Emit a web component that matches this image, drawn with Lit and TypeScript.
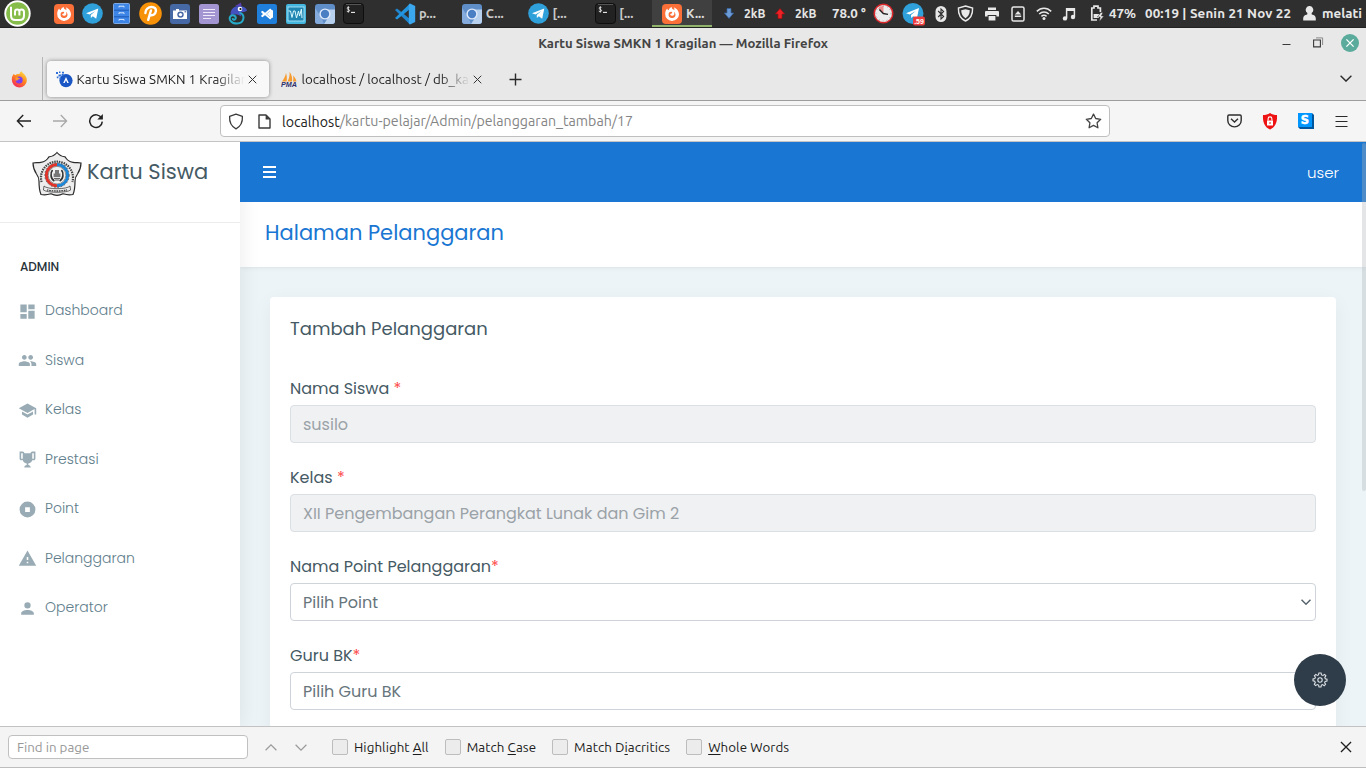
import { LitElement, html, css, svg, nothing } from "lit";
import type { TemplateResult } from "lit";
import { customElement } from "lit/decorators.js";

const t = (text: unknown) => html`<span class="t">${text}</span>`;
const ic = (w: number, h: number, vb: string, body: unknown) =>
  html`<svg width=${w} height=${h} viewBox=${vb} fill="none">${body}</svg>`;

/* ---------- application icons ---------- */
const firefoxTile = ic(20, 20, "0 0 20 20", svg`
  <rect width="20" height="20" rx="4" fill="#fb6f38"/>
  <path d="M3.2 10C3.2 7.6 4 6 5.2 4.6C5.4 5.6 5.8 6 6.6 6.2C7.4 4.4 8.4 3.4 9.8 3C9.6 4.8 11 5.4 12.4 6C12.6 5 12.4 4.2 11.8 3.2C15 4.3 17 7.2 17 10.4A6.9 6.7 0 0 1 3.2 10Z" fill="#fff"/>
  <path d="M7.2 8.4C8.6 7.2 10.4 7.8 10.2 9C9.4 9.8 8.2 9.6 8.2 10.8C9 12.2 11.6 12 12.2 10.4C12.5 9.4 12.4 8.8 12 7.8C14.4 9.6 14 13.8 10.4 14.1C6.6 14 5.8 10.6 7.2 8.4Z" fill="#fb6f38"/>`);
const telegram = ic(21, 21, "0 0 21 21", svg`
  <circle cx="10.5" cy="10.5" r="10.3" fill="#2fa0da"/>
  <path d="M4 10.3L16.3 5.4L14.2 15.8L10.8 13.3L8.9 15L8.7 12L13.4 7.9L7.5 11.6Z" fill="#fff"/>`);
const cabinet = ic(17, 21, "0 0 17 21", svg`
  <rect x=".5" y=".5" width="16" height="20" rx="1" fill="#3c84e6" stroke="#7ea9e2"/>
  <path d="M1 7.2H16M1 13.8H16" stroke="#1d5cb4"/>
  <path d="M6 4.4V3.2H11V4.4M6 11V9.8H11V11M6 17.6V16.4H11V17.6" stroke="#dcebff"/>`);
const pIcon = ic(23, 23, "0 0 23 23", svg`
  <circle cx="11.5" cy="11.5" r="11.3" fill="#f79208"/>
  <path d="M6.4 11C6.4 7.4 9.4 5 12.6 5C15.6 5 17.2 6.8 16.9 9.2C16.5 12 14 13.8 11 13.2" stroke="#fff" stroke-width="2.4" stroke-linecap="round"/>
  <path d="M12 8.4L9.2 17.8" stroke="#fff" stroke-width="2.4" stroke-linecap="round"/>`);
const camera = ic(20, 20, "0 0 20 20", svg`
  <rect width="20" height="20" rx="3" fill="#4668a4"/>
  <path d="M3 6.5H6V5H9V6.5H17V15H3Z" fill="#fff"/><circle cx="10.5" cy="10.6" r="3.2" fill="#4668a4"/><circle cx="10.5" cy="10.6" r="1.7" fill="#fff"/><path d="M14.5 7.2H16.3V8.4H14.5Z" fill="#4668a4"/>`);
const notes = ic(20, 20, "0 0 20 20", svg`
  <rect width="20" height="20" rx="2.5" fill="#a395d2"/>
  <path d="M4 5.5H16M4 8.5H16M4 11.5H16M4 14.5H12" stroke="#eeeafa" stroke-width="1.2"/>`);
const chameleon = ic(20, 23, "0 0 20 23", svg`
  <path d="M7 4L13 .6L13.6 4.6Z" fill="#5a3fae"/>
  <path d="M2.6 12C2.4 7 6.4 4 10.6 4C15 4 18.8 6 19 8.8C16.8 10.4 13.6 10.6 12 10.4C13 11.4 13.6 13 13 14.4C11 13 9.4 12.4 7.4 12.4C5.6 12.2 4 12.6 2.6 14Z" fill="#4452c0"/>
  <path d="M11.4 10.6C17.6 12.4 16.6 21.4 9 21.6C3 21.6 .4 17.4 2.4 14.4C4.4 12 8.4 13.6 7.6 16.6C6.8 18.4 4.6 17.8 4.8 16.2" stroke="#27a9c8" stroke-width="2"/>
  <circle cx="12" cy="7" r="2.3" fill="#fff"/><circle cx="12.5" cy="7" r="1.1" fill="#111"/>`);
const vsTile = ic(20, 20, "0 0 20 20", svg`
  <rect width="20" height="20" rx="2.5" fill="#1f7fdb"/>
  <path d="M4.5 7.5L7 10L4.5 12.5M5 7.5L13.8 14.8M5 12.5L13.8 5.2" stroke="#fff" stroke-width="1.7"/><path d="M12.6 5L16 6.5V13.5L12.6 15V12.4L9.6 10L12.6 7.6Z" fill="#fff"/>`);
const monitor = ic(20, 20, "0 0 20 20", svg`
  <rect width="20" height="20" rx="2" fill="#45b6dd"/><rect x="2" y="3" width="16" height="14" fill="#1f87b2" stroke="#b8ecff" stroke-width=".8"/>
  <path d="M2.5 7H4.5L6 13.5L7.5 7H9L10.5 14L12.5 7L13.6 12L15.4 5L16 14" stroke="#d9f8ff" stroke-width="1"/>`);
const chromium = ic(20, 20, "0 0 20 20", svg`
  <rect width="20" height="20" rx="3" fill="#5e8dc8"/>
  <path d="M10 5.5H20V17A3 3 0 0 1 17 20H9L14.2 12Z" fill="#b7d0ee"/><path d="M0 4L6.2 13L9 20H3A3 3 0 0 1 0 17Z" fill="#84abdc"/>
  <circle cx="10" cy="10" r="5.6" fill="#dfeafa"/><circle cx="10" cy="10" r="4.2" fill="#4a7fc4"/>`);
const terminal = ic(21, 21, "0 0 21 21", svg`
  <rect x=".5" y=".5" width="20" height="20" rx="3.2" fill="#222" stroke="#0e0e0e"/><path d="M3 1.5H18" stroke="#555"/>
  <path d="M6.4 4.4C5 3.8 3.8 4.6 4.2 5.6C4.6 6.5 6.6 6.3 6.6 7.6C6.6 8.7 4.8 8.8 3.8 8.2M5.3 3.4V9.6" stroke="#eee" stroke-width=".9"/><path d="M8 9.4H12" stroke="#eee" stroke-width="1.1"/>`);
const mint = ic(27, 27, "0 0 27 27", svg`
  <circle cx="13.5" cy="13.5" r="13.2" fill="#fff"/><circle cx="13.5" cy="13.5" r="11.3" fill="#86bd4a"/>
  <path d="M7 6.8V15.5C7 18.4 8.6 20 11.4 20H15.6C18.4 20 20 18.4 20 15.5V12C20 10.4 19 9.4 17.6 9.4C16.3 9.4 15.4 10.4 15.4 11.8V15.6M15.4 11.8C15.4 10.4 14.4 9.4 13.2 9.4C11.8 9.4 11 10.4 11 11.8V15.6" stroke="#fff" stroke-width="2"/>`);
const vscode = ic(22, 22, "0 0 22 22", svg`
  <path d="M1 7L3 5.5L16 16V21.5Z" fill="#1f86cf"/><path d="M1 15L3 16.6L16 6V.5Z" fill="#2394de"/><path d="M16 .5L21.2 3V19L16 21.5L14.8 20.5V1.5Z" fill="#3aa7ee"/>`);

const arrowDown = ic(10, 11, "0 0 10 11", svg`<path d="M3 .5H7V5H9.6L5 10.4L.4 5H3Z" fill="#6c9bd6" stroke="#3566a8" stroke-width=".7"/>`);
const arrowUp = ic(10, 11, "0 0 10 11", svg`<path d="M3 10.5H7V6H9.6L5 .6L.4 6H3Z" fill="#ec2226" stroke="#a80d10" stroke-width=".7"/>`);
const clock = ic(21, 21, "0 0 21 21", svg`
  <circle cx="10.5" cy="10.5" r="9.3" fill="#ececec" stroke="#d8262b" stroke-width="1.5"/>
  <path d="M10.5 10.5L5 5.2A7.8 7.8 0 0 1 10.5 2.7Z" fill="#ee8f8f"/><path d="M10.5 10.7L6.4 6.4M10.2 10.5L15 11.4" stroke="#222" stroke-width="1.4"/><circle cx="10.5" cy="10.5" r="7.6" stroke="#888" stroke-width=".8" stroke-dasharray="1 2.9"/>`);
const telegramBadge = ic(24, 24, "0 0 24 24", svg`
  <circle cx="12" cy="11.5" r="10.5" fill="#2fa0da"/>
  <path d="M5 11.2L18 6L16 16L12.2 14.2L10.2 16L10 13L14.7 8.9L8.7 12.6Z" fill="#fff"/>
  <rect x="12" y="14.5" width="12" height="9" rx="2" fill="#ee3c3c"/><text x="18" y="21.6" font-size="7" fill="#fff" text-anchor="middle" font-family="Liberation Sans, sans-serif">.59</text>`);
const bluetooth = ic(12, 16, "0 0 12 16", svg`
  <rect x=".5" y="0" width="11" height="16" rx="5.5" fill="#e8e8e8"/><path d="M3.2 5L8.6 10.6L6 13V3L8.6 5.4L3.2 11" stroke="#2f2f2f" stroke-width="1.1"/>`);
const shieldTray = ic(17, 17, "0 0 17 17", svg`
  <path d="M8.5 1L15.6 3C15.8 9 13.6 13.8 8.5 16C3.4 13.8 1.2 9 1.4 3Z" stroke="#e8e8e8" stroke-width="1.4"/><path d="M8.5 4.2L12.8 5.3C12.8 9 11.2 11.8 8.5 13.2C5.8 11.8 4.2 9 4.2 5.3Z" fill="#e8e8e8"/>`);
const printer = ic(14, 14, "0 0 14 14", svg`<path d="M3 .5H11V3H3ZM1 4H13A1 1 0 0 1 14 5V9.6H11.4V8H2.6V9.6H0V5A1 1 0 0 1 1 4ZM3.6 9H10.4V13.5H3.6Z" fill="#e8e8e8"/>`);
const eject = ic(14, 16, "0 0 14 16", svg`<rect x="1" y="1" width="12" height="14" rx="1.6" stroke="#e8e8e8" stroke-width="1.5"/><path d="M7 5L10.2 8.4H3.8ZM3.8 9.4H10.2V11H3.8Z" fill="#e8e8e8"/>`);
const wifi = ic(16, 13, "0 0 16 13", svg`<path d="M.8 4.4C5 .2 11 .2 15.2 4.4M3.2 7C6 4.2 10 4.2 12.8 7M5.4 9.4C7 8 9 8 10.6 9.4" stroke="#e8e8e8" stroke-width="1.5"/><circle cx="8" cy="11.4" r="1.5" fill="#e8e8e8"/>`);
const music = ic(14, 14, "0 0 14 14", svg`<path d="M4.6 11V1.8H12.4V9.8" stroke="#e8e8e8" stroke-width="1.5"/><path d="M4 1H13V4H4Z" fill="#e8e8e8"/><circle cx="3" cy="11.4" r="2.2" fill="#e8e8e8"/><circle cx="11" cy="10" r="2.2" fill="#e8e8e8"/>`);
const battery = ic(15, 17, "0 0 15 17", svg`<path d="M7 15H1.8V3H4V1.2H8V3H10.4V7" stroke="#e8e8e8" stroke-width="1.7"/><path d="M3.6 9H9V13H3.6Z" fill="#e8e8e8"/><path d="M10.8 7.4L7.4 12H10.2L9.4 16.4L14 11H11.4L13 7.4Z" fill="#e8e8e8" stroke="#2f2f2f" stroke-width=".5"/>`);
const person = ic(13, 15, "0 0 13 15", svg`<path d="M6.5 0A3.6 3.8 0 0 1 8.6 7L8.8 8.4C11.4 8.8 12.8 10 12.8 12.4V14.4H.2V12.4C.2 10 1.6 8.8 4.2 8.4L4.4 7A3.6 3.8 0 0 1 6.5 0Z" fill="#e8e8e8"/>`);

/* ---------- browser icons ---------- */
const firefoxColor = ic(17, 17, "0 0 17 17", svg`
  <defs><linearGradient id="f" x1="14" y1="1" x2="4" y2="16" gradientUnits="userSpaceOnUse"><stop stop-color="#ffe14a"/><stop offset=".45" stop-color="#ff8a1e"/><stop offset="1" stop-color="#f5245c"/></linearGradient></defs>
  <path d="M.8 8.6C.8 5.6 1.8 4 3 2.8C3.2 3.6 3.6 4 4.2 4.2C5.6 2.8 7 2.8 8.4 3C8.6 2 9.4 .8 10.6 .2C11 2 15.8 3.6 15.9 9.2A7.5 7.5 0 0 1 .8 8.6Z" fill="url(#f)"/>
  <circle cx="8.2" cy="9" r="3.5" fill="#7b3ff0"/><path d="M4.4 6.6C6.4 5.8 7.4 7 9 7.2C8.6 8.6 6.6 8 6.4 9.4L4.6 9.6Z" fill="#ff9a24"/>`);
const siteIcon = ic(17, 17, "0 0 17 17", svg`
  <circle cx="10" cy="9.6" r="6.6" fill="#1a56c4"/><path d="M10 6L12.8 12H11.3L10 9.2L8.7 12H7.2Z" fill="#fff"/>
  <path d="M0 1H2V3H0ZM3 .5H4.5V2H3ZM2.5 3.5H5V5.5H2.5ZM6 .8H8V2.6H6ZM.8 5.6H2.4V7.2H.8ZM3.4 6.6H5V8.4H3.4ZM5.6 3H7.6V5H5.6Z" fill="#2f70d8"/>`);
const pmaIcon = ic(17, 17, "0 0 17 17", svg`
  <path d="M1 10.5C3 8 4.4 5 5 2C6 5 6 8 5.6 10.5ZM6.6 10.5C8.4 7 8.8 4 8.6 .8C11 4 11.4 7.4 11 10.5ZM12 10.5C12.6 8 12.4 6.4 12 4.6C14 6.4 15.2 8.6 15.4 10.5Z" fill="#f79b2e"/>
  <text x="0" y="16.4" textLength="16" lengthAdjust="spacingAndGlyphs" font-family="Liberation Sans, sans-serif" font-size="7" font-weight="700" font-style="italic" fill="#2c2f6c">PMA</text>`);
const cross = (s: number, c = "#333", sw = 1.2) => ic(s, s, "0 0 10 10", svg`<path d="M.8 .8L9.2 9.2M9.2 .8L.8 9.2" stroke=${c} stroke-width=${sw}/>`);
const plus = ic(13, 13, "0 0 13 13", svg`<path d="M6.5 .5V12.5M.5 6.5H12.5" stroke="#2a2a2a" stroke-width="1.4"/>`);
const chev = (w: number, h: number, c: string, sw = 1.4, up = false) =>
  ic(w, h, "0 0 12 7", svg`<path d=${up ? "M.6 6.2L6 .9L11.4 6.2" : "M.6 .8L6 6.1L11.4 .8"} stroke=${c} stroke-width=${sw}/>`);
const back = ic(16, 14, "0 0 16 14", svg`<path d="M15 7H1.6M7.2 1L1.4 7L7.2 13" stroke="#222" stroke-width="1.4"/>`);
const forward = ic(16, 14, "0 0 16 14", svg`<path d="M1 7H14.4M8.8 1L14.6 7L8.8 13" stroke="#a8a8a8" stroke-width="1.3"/>`);
const reload = ic(16, 16, "0 0 16 16", svg`<path d="M13.6 5.2A6.3 6.3 0 1 0 14.3 8.6" stroke="#222" stroke-width="1.5"/><path d="M14.9 1V6.6H9.3Z" fill="#222"/>`);
const shield = ic(16, 17, "0 0 16 17", svg`<path d="M8 1.2L14.4 3.4C14.7 9 12.6 13.6 8 15.8C3.4 13.6 1.3 9 1.6 3.4Z" stroke="#3a3a3a" stroke-width="1.3" stroke-linejoin="round"/>`);
const pageIcon = ic(13, 15, "0 0 13 15", svg`<path d="M1 1H8L12 5V14H1Z" stroke="#3a3a3a" stroke-width="1.4" stroke-linejoin="round"/><path d="M7.6 1V5.4H12Z" fill="#3a3a3a"/>`);
const star = ic(17, 16, "0 0 17 16", svg`<path d="M8.5 1.1L10.7 5.5L15.7 6.3L12.1 9.8L12.9 14.8L8.5 12.4L4.1 14.8L4.9 9.8L1.3 6.3L6.3 5.5Z" stroke="#444" stroke-width="1.3" stroke-linejoin="round"/>`);
const pocket = ic(15, 14, "0 0 15 14", svg`<path d="M2 1H13A1.2 1.2 0 0 1 14.2 2.2V6.4A6.7 6.5 0 0 1 .8 6.4V2.2A1.2 1.2 0 0 1 2 1Z" stroke="#2e2e2e" stroke-width="1.4"/><path d="M4 4.8L7.5 8L11 4.8" stroke="#2e2e2e" stroke-width="1.4"/>`);
const redShield = ic(16, 17, "0 0 16 17", svg`<path d="M8 0C10 1.4 12.4 2 15 2C15.4 9 13.6 14 8 16.6C2.4 14 .6 9 1 2C3.6 2 6 1.4 8 0Z" fill="#ee1212"/><path d="M5 7.5H11V12.5H5Z" fill="#fff"/><path d="M6.1 7.6V5.8A1.9 1.9 0 0 1 9.9 5.8V7.6" stroke="#fff" stroke-width="1.1"/><path d="M8 9V11" stroke="#ee1212"/>`);
const sIcon = ic(16, 16, "0 0 16 16", svg`<path d="M0 0H14L16 2V16H2L0 14Z" fill="#00569c"/><path d="M0 0H14V14H0Z" fill="#0096ff"/><text x="7" y="11" font-family="DejaVu Sans, sans-serif" font-weight="700" font-size="11.5" fill="#fff" stroke="#fff" stroke-width=".5" text-anchor="middle">S</text>`);
const menu = ic(13, 11, "0 0 13 11", svg`<path d="M.5 .5H12.5M.5 5.5H12.5M.5 10.5H12.5" stroke="#2a2a2a" stroke-width="1.2"/>`);

/* ---------- page icons ---------- */
const mdi = (d: string) => ic(19, 19, "0 0 24 24", svg`<path fill-rule="evenodd" d=${d} fill="#99abb4"/>`);
const crest = ic(50, 46, "0 0 50 46", svg`
  <path d="M25 1.5C27 4 30 5.5 33 5.8C34.5 8.4 37.6 11 41 11.4C44 11.8 47 11.6 49 12C49 16 47.5 20 45.5 23C43.5 25.5 43 28 43 30.5C43 36 42.5 40 41 43.5C37 44.5 33.5 43.6 31 42.8C27 44.8 23 44.8 19 42.8C16.5 43.6 13 44.5 9 43.5C7.5 40 7 36 7 30.5C7 28 6.5 25.5 4.5 23C2.5 20 1 16 1 12C3 11.6 6 11.8 9 11.4C12.4 11 15.5 8.4 17 5.8C20 5.5 23 4 25 1.5Z" fill="#ededed" stroke="#2b2b2b" stroke-width="1.2"/>
  <path d="M9.6 31A16 16 0 1 1 40.4 31" stroke="#444" stroke-width="2.2" stroke-dasharray="1.5 .9"/>
  <path d="M25 13.6A10.6 10.6 0 0 0 25 34.8" stroke="#e3342b" stroke-width="3"/><path d="M25 13.6A10.6 10.6 0 0 1 25 34.8" stroke="#1d86d6" stroke-width="3"/>
  <circle cx="25" cy="24.2" r="12.2" stroke="#555" stroke-width=".9" stroke-dasharray="1.7 1.7"/>
  <circle cx="25" cy="24.2" r="8.8" fill="#f2f2f2" stroke="#555" stroke-width=".6"/>
  <path d="M20.5 19C18 22 18.6 28 22.4 30M29.5 19C32 22 31.4 28 27.6 30" stroke="#333" stroke-width="1.7"/>
  <path d="M23 19H27V22.4H28.4V26H21.6V22.4H23Z" fill="#777"/><path d="M22 27.4H28M23 29H27" stroke="#444" stroke-width=".9"/>
  <path d="M12 35C15 38.6 35 38.6 38 35L38.6 39C35 42 15 42 11.4 39Z" fill="#ececec" stroke="#444" stroke-width=".8"/><path d="M15 38.8C20 40.4 30 40.4 35 38.8" stroke="#444" stroke-width="1.4" stroke-dasharray="1.6 .8"/>`);
const gear = ic(16, 16, "0 0 16 16", svg`
  <path d="M6.9 1H9.1L9.5 2.9L11 3.5L12.6 2.4L13.9 3.9L12.8 5.4L13.3 6.7L15 7.1V9L13.2 9.4L12.6 10.8L13.6 12.3L12.2 13.7L10.6 12.6L9.4 13.1L9 15H7L6.6 13.1L5.2 12.6L3.6 13.6L2.3 12.2L3.3 10.7L2.7 9.3L1 8.9V7L2.8 6.6L3.4 5.2L2.4 3.8L3.8 2.4L5.3 3.4L6.5 2.9Z" stroke="#dde1e4" stroke-width="1.1"/><circle cx="8" cy="8" r="2.2" stroke="#dde1e4" stroke-width="1.1"/>`);

const MENU: [string, string][] = [
  ["Dashboard", "M13,3V9H21V3M13,21H21V11H13M3,21H11V15H3M3,13H11V3H3V13Z"],
  ["Siswa", "M16 11c1.66 0 2.99-1.34 2.99-3S17.66 5 16 5c-1.66 0-3 1.34-3 3s1.34 3 3 3zm-8 0c1.66 0 2.99-1.34 2.99-3S9.66 5 8 5C6.34 5 5 6.34 5 8s1.34 3 3 3zm0 2c-2.33 0-7 1.17-7 3.5V19h14v-2.5c0-2.33-4.67-3.5-7-3.5zm8 0c-.29 0-.62.02-.97.05 1.16.84 1.97 1.97 1.97 3.45V19h6v-2.5c0-2.33-4.67-3.5-7-3.5z"],
  ["Kelas", "M12,3L1,9L12,15L21,10.09V17H23V9M5,13.18V17.18L12,21L19,17.18V13.18L12,17L5,13.18Z"],
  ["Prestasi", "M18,2C17.1,2 16,3 16,4H8C8,3 6.9,2 6,2H2V11C2,12 3,13 4,13H6.2C6.6,15 7.9,16.7 11,17V19.08C8,19.54 8,22 8,22H16C16,22 16,19.54 13,19.08V17C16.1,16.7 17.4,15 17.8,13H20C21,13 22,12 22,11V2H18M6,11H4V4H6V11M20,11H18V4H20V11Z"],
  ["Point", "M12 2A10 10 0 1 0 12 22A10 10 0 1 0 12 2ZM9 9H15V15H9Z"],
  ["Pelanggaran", "M13,14H11V10H13M13,18H11V16H13M1,21H23L12,2L1,21Z"],
  ["Operator", "M12,4A4,4 0 0,1 16,8A4,4 0 0,1 12,12A4,4 0 0,1 8,8A4,4 0 0,1 12,4M12,14C16.42,14 20,15.79 20,18V20H4V18C4,15.79 7.58,14 12,14Z"],
];

@customElement("desktop-panel")
class DesktopPanel extends LitElement {
  static styles = css`
    :host { display: flex; height: 28px; background: #2f2f2f; border-bottom: 1px solid #232323; box-sizing: border-box; color: #e6e6e6; font: 700 13.333px/27px Ubuntu, "Noto Sans", sans-serif; }
    svg { display: block; flex: none; }
    .t { white-space: pre; }
    .mint { width: 35px; display: flex; align-items: center; justify-content: center; }
    .launch { display: grid; grid-template-columns: repeat(11, 29px); margin-left: 14px; place-items: center; }
    .tasks { display: flex; margin-left: 17px; width: 327px; }
    .task { width: 66.8px; display: grid; grid-template-columns: 40px auto; justify-content: start; place-items: center; box-sizing: border-box; color: #c9c9c9; height: 27px; font-size: 12.8px; }
    .task .t { margin-left: -6px; }
    .on { width: 60px; background: #404040; border-bottom: 2px solid #8fb36b; color: #dcdcdc; }
    .tray { display: grid; grid-template-columns: 30px 20px 31px 37px 43px 16px 44px 12px 36px 18px 34px 18px 32px 24px 36px 151px 26px 44px; margin-left: 2px; align-items: center; }
    .net { font-size: 12px; }
    .date { letter-spacing: .14px; }
    .i { display: flex; justify-content: center; }
  `;
  render() {
    const i = (x: TemplateResult) => html`<div class="i">${x}</div>`;
    return html`
      <div class="mint">${mint}</div>
      <div class="launch">${[firefoxTile, telegram, cabinet, pIcon, camera, notes, chameleon, vsTile, monitor, chromium, terminal]}</div>
      <div class="tasks">
        <div class="task">${vscode}${t("p...")}</div>
        <div class="task">${chromium}${t("C...")}</div>
        <div class="task">${telegram}${t("[...")}</div>
        <div class="task">${terminal}${t("[...")}</div>
        <div class="task on">${firefoxTile}${t("K...")}</div>
      </div>
      <div class="tray">
        ${i(arrowDown)}<span class="net">${t("2kB")}</span>${i(arrowUp)}<span class="net">${t("2kB")}</span>${t("78.0 °")}
        ${[clock, telegramBadge, bluetooth, shieldTray, printer, eject, wifi, music, battery].map(i)}
        ${t("47%")}<span class="date">${t("00:19 | Senin 21 Nov 22")}</span>${i(person)}${t("melati")}
      </div>`;
  }
}

@customElement("browser-chrome")
class BrowserChrome extends LitElement {
  static styles = css`
    :host { display: flex; flex-direction: column; height: 114px; font: 13.333px/20px Ubuntu, "Noto Sans", sans-serif; color: #222; background: #e8e8e8; }
    svg { display: block; flex: none; }
    .t { white-space: pre; }
    .title { height: 29px; display: grid; grid-template-columns: 1fr auto 1fr; align-items: center; font-weight: 700; font-size: 13.15px; color: #444; }
    .win { display: flex; justify-content: flex-end; align-items: center; padding-right: 7px; }
    .win svg { margin-left: 17px; }
    .win svg:nth-child(2) { margin-left: 22px; }
    .tabs { height: 44px; box-sizing: border-box; border-bottom: 1px solid #9d9d9d; display: flex; align-items: center; }
    .pin { width: 43px; height: 43px; border-right: 1px solid #b4b4b4; display: flex; align-items: center; padding: 1px 0 0 11px; box-sizing: border-box; }
    .tab { width: 222px; height: 36px; display: flex; align-items: center; padding: 0 0 0 9px; box-sizing: border-box; margin: 1px 0 0 3px; letter-spacing: .04px; }
    .tab.active { background: #f8f8f8; border-radius: 4px; box-shadow: 0 0 4px rgba(0,0,0,.42); margin-left: 3.5px; }
    .label { width: 168px; overflow: hidden; padding-top: 1px; line-height: 21px; margin: 0 3px 0 4px; -webkit-mask-image: linear-gradient(to right, #000 82%, transparent 100%); mask-image: linear-gradient(to right, #000 82%, transparent 100%); }
    .plus { margin: 1px 0 0 15px; }
    .more { margin: 0 14px 0 auto; }
    .nav { height: 41px; box-sizing: border-box; background: #f5f5f5; border-bottom: 1px solid #c4c4c4; display: flex; align-items: center; }
    .btns { display: flex; gap: 20px; width: 220px; padding: 0 0 0 16px; box-sizing: border-box; align-items: center; }
    .url { width: 890px; height: 32px; box-sizing: border-box; border: 1px solid #bfbfbf; border-radius: 4px; background: #fff; display: flex; align-items: center; padding: 0 7px; font-size: 14.2px; }
    .url .t { padding-top: 1px; }
    .url .pg { margin: 0 11px 0 14px; }
    .url .star { margin-left: auto; }
    .path { color: #848484; }
    .ext { display: flex; align-items: center; margin-left: 117px; gap: 20px; }
    .ext .last { margin-left: 1px; }
  `;
  render() {
    return html`
      <div class="title"><span></span>${t("Kartu Siswa SMKN 1 Kragilan — Mozilla Firefox")}
        <div class="win">
          ${ic(9, 9, "0 0 9 9", svg`<path d="M.5 6.5H8.5" stroke="#3a3a3a"/>`)}
          ${ic(11, 11, "0 0 11 11", svg`<path d="M.6 3H7.4V9.9H.6Z" stroke="#3a3a3a" stroke-width="1.1"/><path d="M3 .9H9.6V8" stroke="#8a8a8a"/>`)}
          ${ic(18, 18, "0 0 18 18", svg`<circle cx="9" cy="9" r="9" fill="#5aab9b"/><path d="M5.4 5.4L12.6 12.6M12.6 5.4L5.4 12.6" stroke="#fff" stroke-width="1.3"/>`)}
        </div>
      </div>
      <div class="tabs">
        <div class="pin">${firefoxColor}</div>
        <div class="tab active">${siteIcon}<div class="label">${t("Kartu Siswa SMKN 1 Kragilan")}</div>${cross(9, "#333", 1.1)}</div>
        <div class="tab">${pmaIcon}<div class="label">${t("localhost / localhost / db_kartu")}</div>${cross(9, "#333", 1.1)}</div>
        <div class="plus">${plus}</div>
        <div class="more">${chev(12, 7, "#2a2a2a")}</div>
      </div>
      <div class="nav">
        <div class="btns">${back}${forward}${reload}</div>
        <div class="url">${shield}<span class="pg">${pageIcon}</span>${t("localhost")}<span class="path">${t("/kartu-pelajar/Admin/pelanggaran_tambah/17")}</span><span class="star">${star}</span></div>
        <div class="ext">${pocket}${redShield}${sIcon}<span class="last">${menu}</span></div>
      </div>`;
  }
}

@customElement("side-bar")
class SideBar extends LitElement {
  static styles = css`
    :host { display: block; width: 240px; background: #fff; font-family: Poppins, Inter, sans-serif; box-shadow: 1px 0 20px rgba(0,0,0,.08); z-index: 2; }
    svg { display: block; }
    .t { white-space: pre; }
    .brand { height: 81px; box-sizing: border-box; border-bottom: 1px solid #ececec; padding: 9px 0 0 32px; display: flex; gap: 5px; color: #455a64; font-size: 21px; line-height: 41px; }
    .head { font-size: 12px; font-weight: 500; color: #263238; line-height: 20px; margin: 34px 0 9px 20px; }
    .item { height: 49.5px; display: flex; align-items: center; padding-left: 18px; gap: 8px; font-size: 14px; font-weight: 300; color: #607d8b; }
    .item svg { margin-top: 1px; }
  `;
  render() {
    return html`
      <div class="brand">${crest}${t("Kartu Siswa")}</div>
      <div class="head">${t("ADMIN")}</div>
      ${MENU.map(([name, d]) => html`<div class="item">${mdi(d)}${t(name)}</div>`)}`;
  }
}

@customElement("find-bar")
class FindBar extends LitElement {
  static styles = css`
    :host { display: flex; align-items: center; height: 42px; box-sizing: border-box; border-top: 1px solid #c2c2c2; border-bottom: 1px solid #bdbdbd; background: #f4f4f4; padding: 0 14px 0 8px; font: 13.333px/20px Ubuntu, "Noto Sans", sans-serif; color: #1c1c1c; }
    svg { display: block; }
    .t { white-space: pre; }
    .in { width: 240px; height: 24px; box-sizing: border-box; border: 1px solid #c0c0c0; border-radius: 4px; background: #fff; color: #989898; padding-left: 8px; line-height: 24px; }
    .arrows { display: flex; gap: 18px; margin: 0 25px 0 17px; }
    .opt { display: flex; align-items: center; gap: 6px; margin-right: 16px; letter-spacing: .07px; }
    .opt .t { padding-top: 1px; }
    .box { width: 16px; height: 16px; box-sizing: border-box; border: 1px solid #bdbdbd; border-radius: 2px; background: #ececec; }
    .x { margin-left: auto; }
    u { text-underline-offset: 2px; }
  `;
  render() {
    const opt = (a: string, k: string, b: string) =>
      html`<div class="opt"><span class="box"></span>${t(html`${a || nothing}<u>${k}</u>${b}`)}</div>`;
    return html`
      <div class="in">${t("Find in page")}</div>
      <div class="arrows">${chev(12, 7, "#999", 1.2, true)}${chev(12, 7, "#999", 1.2)}</div>
      ${opt("Highlight ", "A", "ll")}${opt("Match ", "C", "ase")}${opt("Match D", "i", "acritics")}${opt("", "W", "hole Words")}
      <div class="x">${cross(12, "#1e1e1e", 1.1)}</div>`;
  }
}

@customElement("app-root")
class AppRoot extends LitElement {
  static styles = css`
    :host { display: flex; flex-direction: column; width: 1366px; height: 768px; overflow: hidden; position: relative; font-family: Poppins, Inter, sans-serif; }
    svg { display: block; }
    .t { white-space: pre; }
    .page { display: flex; height: 584px; overflow: hidden; background: #ecf4f7; }
    .main { flex: 1; display: flex; flex-direction: column; min-width: 0; }
    .top { height: 60px; background: #1976d2; display: flex; align-items: center; justify-content: space-between; padding: 0 27px 0 23px; color: #fff; font-size: 15px; font-weight: 300; z-index: 3; flex: none; }
    .crumb { height: 65px; box-sizing: border-box; background: #fff; box-shadow: 1px 0 5px rgba(0,0,0,.1); padding-left: 25px; line-height: 61px; font-size: 21px; color: #1976d2; flex: none; }
    .card { margin: 30px 30px 0; height: 600px; flex: none; background: #fff; border-radius: 4px; box-shadow: 0 5px 20px rgba(0,0,0,.05); padding: 20px; box-sizing: border-box; color: #455a64; }
    h4 { margin: 0 0 37px; font-size: 18px; font-weight: 400; line-height: 24px; }
    .field { margin-bottom: 24px; height: 65px; font-size: 16px; }
    label { display: block; line-height: 21px; height: 27px; }
    em { font-style: normal; color: #fc4b4b; }
    .ctl { height: 38px; box-sizing: border-box; border: 1px solid #ced4da; border-radius: 4px; padding: 0 4px 0 12px; color: #67757c; display: flex; justify-content: space-between; align-items: center; background: #fff; }
    .ctl .t { line-height: 24px; padding-top: 2px; }
    .off { background: #f0f1f3; border-color: #dadfe4; color: #9aa2a7; }
    .fab { position: absolute; left: 1294px; top: 654px; width: 52px; height: 52px; border-radius: 50%; background: #2f3d4a; display: grid; place-items: center; z-index: 5; }
    .scroll { position: absolute; left: 1362px; top: 143px; width: 4px; height: 348px; background: rgba(175,180,185,.35); border-radius: 2px; z-index: 6; }
  `;
  render() {
    const field = (name: string, star: string, val: string, off: boolean, arrow = false) => html`
      <div class="field">
        <label>${t(html`${name}<em>${star}</em>`)}</label>
        <div class="ctl ${off ? "off" : ""}">${t(val)}${arrow ? chev(10, 6, "#55626b", 1.8) : nothing}</div>
      </div>`;
    return html`
      <desktop-panel></desktop-panel>
      <browser-chrome></browser-chrome>
      <div class="page">
        <side-bar></side-bar>
        <div class="main">
          <div class="top">${ic(13, 12, "0 0 13 12", svg`<path d="M0 1H13M0 6H13M0 11H13" stroke="#fff" stroke-width="1.9"/>`)}${t("user")}</div>
          <div class="crumb">${t("Halaman Pelanggaran")}</div>
          <div class="card">
            <h4>${t("Tambah Pelanggaran")}</h4>
            ${field("Nama Siswa ", "*", "susilo", true)}
            ${field("Kelas ", "*", "XII Pengembangan Perangkat Lunak dan Gim 2", true)}
            ${field("Nama Point Pelanggaran", "*", "Pilih Point", false, true)}
            ${field("Guru BK", "*", "Pilih Guru BK", false)}
          </div>
        </div>
      </div>
      <find-bar></find-bar>
      <div class="scroll"></div>
      <div class="fab">${gear}</div>`;
  }
}
